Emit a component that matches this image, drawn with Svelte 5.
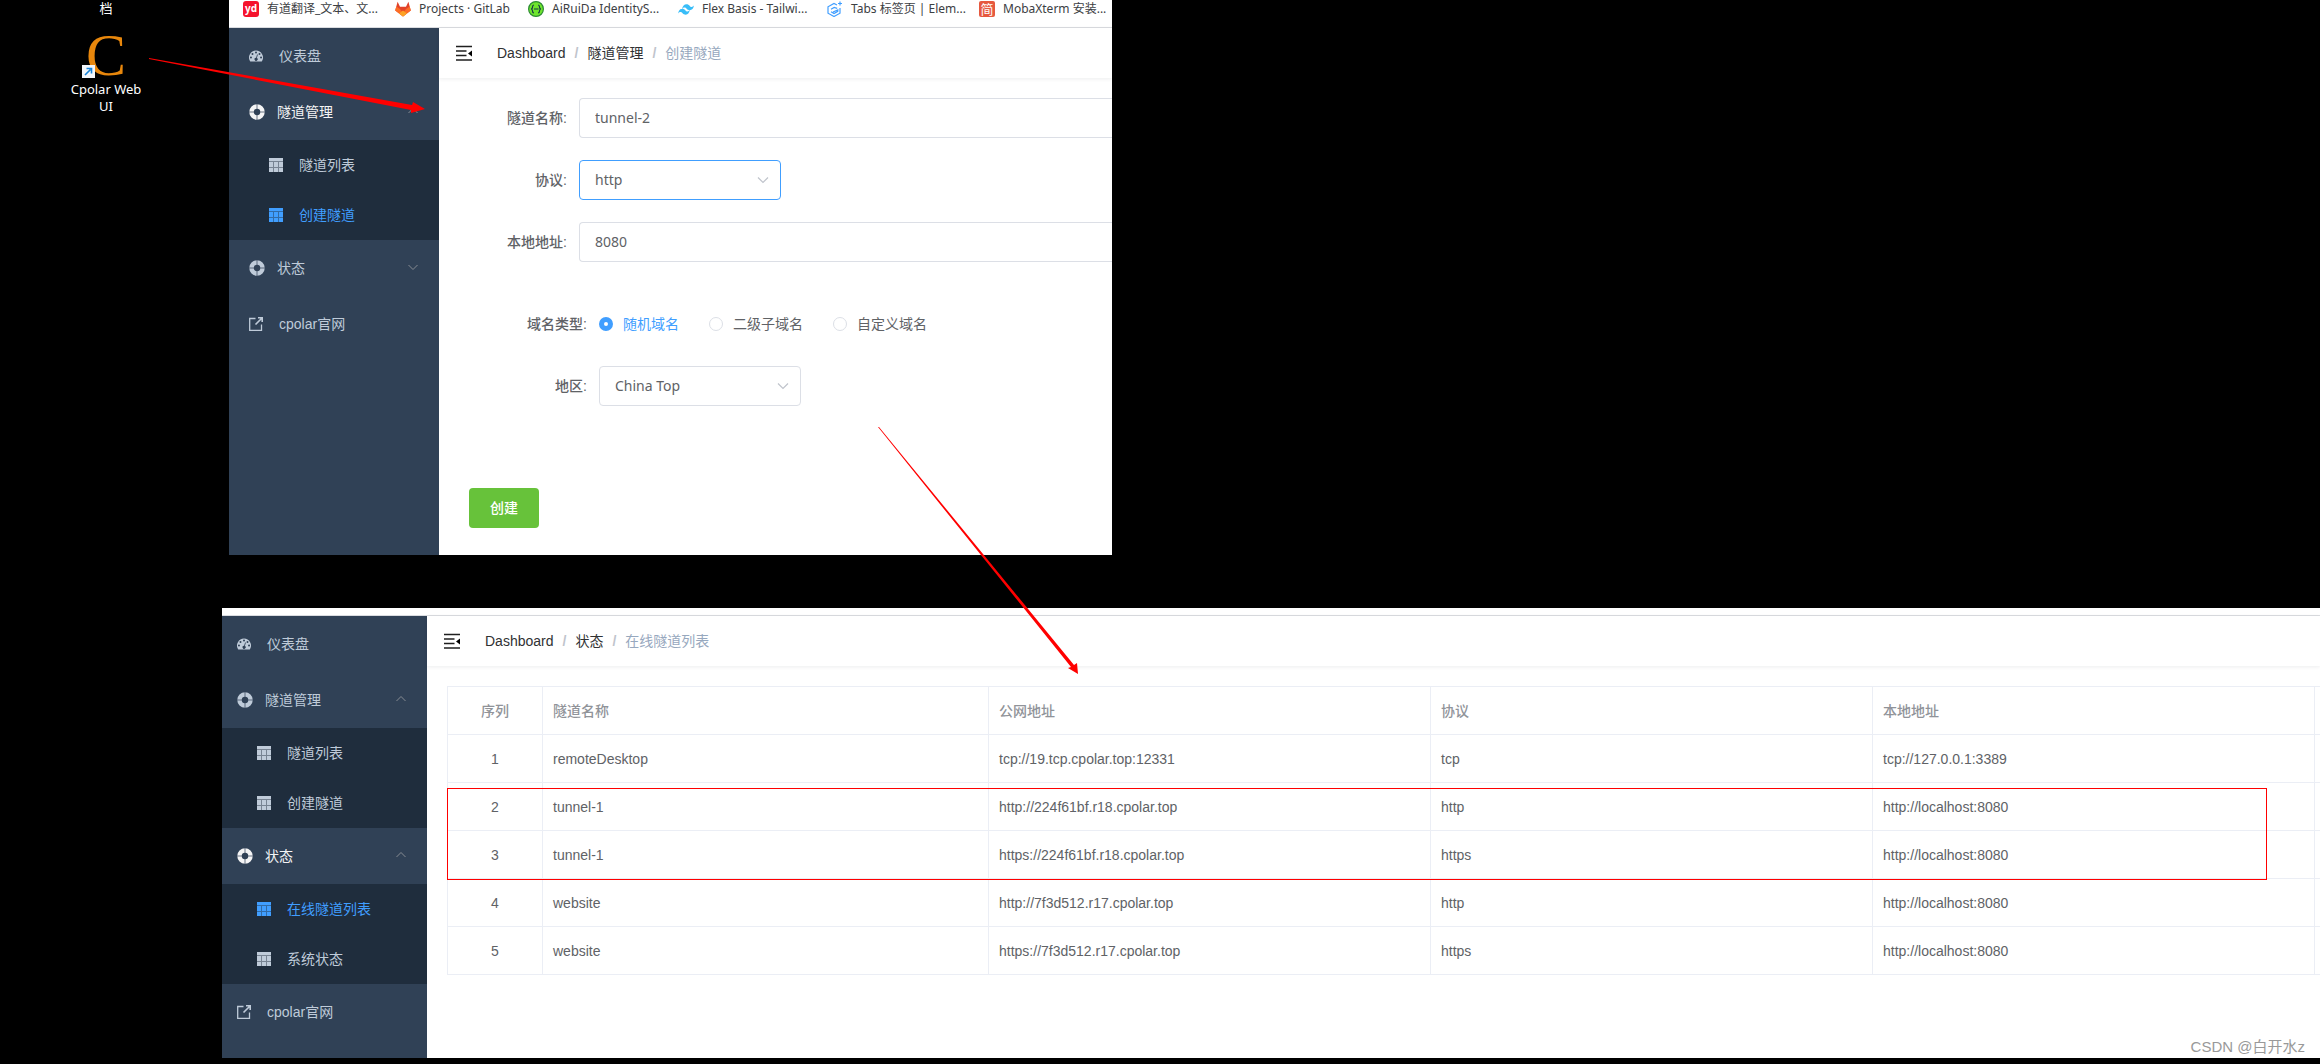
<script lang="ts">
    interface MenuItem {
        label: string;
        icon: string;
        state?: string;
        arrow?: string;
        children?: MenuItem[];
    }

    const bookmarks = [
        { label: '有道翻译_文本、文...', icon: 'youdao' },
        { label: 'Projects · GitLab', icon: 'gitlab' },
        { label: 'AiRuiDa IdentityS...', icon: 'swagger' },
        { label: 'Flex Basis - Tailwi...', icon: 'tailwind' },
        { label: 'Tabs 标签页 | Elem...', icon: 'element' },
        { label: 'MobaXterm 安装...', icon: 'jian' },
    ];

    const createMenu: MenuItem[] = [
        { label: '仪表盘', icon: 'dashboard' },
        {
            label: '隧道管理', icon: 'help', state: 'open', arrow: 'up',
            children: [
                { label: '隧道列表', icon: 'table' },
                { label: '创建隧道', icon: 'table', state: 'active' },
            ],
        },
        { label: '状态', icon: 'help', arrow: 'down' },
        { label: 'cpolar官网', icon: 'link' },
    ];

    const statusMenu: MenuItem[] = [
        { label: '仪表盘', icon: 'dashboard' },
        {
            label: '隧道管理', icon: 'help', arrow: 'up',
            children: [
                { label: '隧道列表', icon: 'table' },
                { label: '创建隧道', icon: 'table' },
            ],
        },
        {
            label: '状态', icon: 'help', state: 'open', arrow: 'up',
            children: [
                { label: '在线隧道列表', icon: 'table', state: 'active' },
                { label: '系统状态', icon: 'table' },
            ],
        },
        { label: 'cpolar官网', icon: 'link' },
    ];

    const tunnels = [
        { name: 'remoteDesktop', url: 'tcp://19.tcp.cpolar.top:12331', protocol: 'tcp', local: 'tcp://127.0.0.1:3389' },
        { name: 'tunnel-1', url: 'http://224f61bf.r18.cpolar.top', protocol: 'http', local: 'http://localhost:8080' },
        { name: 'tunnel-1', url: 'https://224f61bf.r18.cpolar.top', protocol: 'https', local: 'http://localhost:8080' },
        { name: 'website', url: 'http://7f3d512.r17.cpolar.top', protocol: 'http', local: 'http://localhost:8080' },
        { name: 'website', url: 'https://7f3d512.r17.cpolar.top', protocol: 'https', local: 'http://localhost:8080' },
    ];

    const domainTypes = ['随机域名', '二级子域名', '自定义域名'];

    let tunnelName = $state('tunnel-2');
    let protocol = $state('http');
    let localAddress = $state('8080');
    let domainType = $state('随机域名');
    let region = $state('China Top');
</script>

{#snippet menuIcon(name: string)}
    {#if name === 'dashboard'}
        <svg class="icon" viewBox="0 0 128 100" aria-hidden="true">
            <path fill="currentColor" fill-rule="evenodd" d="M64 0a64 64 0 0 1 54 98q-1 2-4 2H14q-3 0-4-2A64 64 0 0 1 64 0zM18 55a9 9 0 1 0 0 18 9 9 0 0 0 0-18zm14-32a9 9 0 1 0 0 18 9 9 0 0 0 0-18zM64 9a9 9 0 1 0 0 18 9 9 0 0 0 0-18zm46 46a9 9 0 1 0 0 18 9 9 0 0 0 0-18zM96 23a9 9 0 1 0 0 18 9 9 0 0 0 0-18zM73 38l-8 28a14 14 0 1 0 7 2l8-28q0-4-3-5-3 0-4 3z" />
        </svg>
    {:else if name === 'help'}
        <svg class="icon big" viewBox="0 0 16 16" aria-hidden="true">
            <circle cx="8" cy="8" r="5.500" fill="none" stroke="currentColor" stroke-width="4.500" />
            <path class="gap" d="M8 0v5M8 11v5M0 8h5M11 8h5" stroke-width=".7" />
        </svg>
    {:else if name === 'table'}
        <svg class="icon" viewBox="0 0 14 14" aria-hidden="true">
            <path fill="currentColor" d="M0 0h14v3H0zM0 4h4v5H0zM5 4h4v5H5zM10 4h4v5h-4zM0 10h4v4H0zM5 10h4v4H5zM10 10h4v4h-4z" />
            <path fill="currentColor" opacity=".55" d="M0 3h14v1H0zM4 4h1v10H4zM9 4h1v10H9zM0 9h14v1H0z" />
        </svg>
    {:else}
        <svg class="icon" viewBox="0 0 14 14" fill="none" stroke="currentColor" aria-hidden="true">
            <path d="M6.500 1.500H.7v11.800h11.800V7.500" stroke-width="1.300" />
            <path d="M6.500 7.500L12.500 1.500M9 .8h4.200V5" stroke-width="1.600" />
        </svg>
    {/if}
{/snippet}

{#snippet sidebar(items: MenuItem[])}
    <nav class="sidebar">
        {#each items as item}
            <a href="#menu" class="menu-item {item.state ?? ''}" class:wide-icon={item.icon === 'help'}>
                {@render menuIcon(item.icon)}
                <span>{item.label}</span>
                {#if item.arrow}
                    <svg class="arrow {item.arrow}" viewBox="0 0 12 12" aria-hidden="true">
                        <path d="M1.500 8L6 3.500 10.500 8" fill="none" stroke="#909399" stroke-width=".9" />
                    </svg>
                {/if}
            </a>
            {#if item.children}
                <div class="submenu">
                    {#each item.children as child}
                        <a href="#menu" class="menu-item {child.state ?? ''}">
                            {@render menuIcon(child.icon)}
                            <span>{child.label}</span>
                        </a>
                    {/each}
                </div>
            {/if}
        {/each}
    </nav>
{/snippet}

{#snippet navbar(parent: string, current: string)}
    <header class="navbar">
        <button class="hamburger" aria-label="Toggle sidebar">
            <svg viewBox="0 0 20 20" aria-hidden="true">
                <path d="M2 3.500h16M2 8h10.500M2 12.500h10.500M2 17h16" fill="none" stroke="#1f1f1f" stroke-width="1.400" />
                <path d="M18 7.500v6l-4-3z" fill="#000" />
            </svg>
        </button>
        <div class="breadcrumb">
            <a href="#dashboard">Dashboard</a>
            <b>/</b>
            <a href="#parent">{parent}</a>
            <b>/</b>
            <span>{current}</span>
        </div>
    </header>
{/snippet}

{#snippet bookmarkIcon(name: string)}
    <svg viewBox="0 0 16 16" aria-hidden="true">
        {#if name === 'youdao'}
            <rect width="16" height="16" rx="3" fill="#f5132d" />
            <text x="8" y="11" text-anchor="middle" font-size="10" font-weight="700" fill="#fff">yd</text>
        {:else if name === 'gitlab'}
            <path fill="#e24329" d="M8 15.500L.2 9.500 2.600.8l2.400 5h6l2.400-5 2.400 8.700z" />
            <path fill="#fc6d26" d="M8 15.500L.2 9.500 1.300 5.500 5 8l3 4 3-4 3.700-2.500 1.100 4z" />
            <path fill="#fca326" d="M8 15.500l-4-3 4-3 4 3z" />
        {:else if name === 'swagger'}
            <circle cx="8" cy="8" r="7.400" fill="#6ee52d" stroke="#2c8b33" stroke-width="1.200" />
            <path d="M6 4Q4.500 4 4.500 6T3 8q1.500 0 1.500 2T6 12M10 4q1.500 0 1.500 2T13 8q-1.500 0-1.500 2T10 12M6 8h4.500" fill="none" stroke="#173647" stroke-width="1.200" />
        {:else if name === 'tailwind'}
            <path fill="#38bdf8" d="M4 8q1-4.800 4.500-4.800c3 0 3.200 2.400 4.500 2.800q1.600.4 3-1.400-1 4.600-4.200 4.600c-3 0-3.300-2.200-4.700-2.600Q5.400 6.200 4 8zM0 12.500q1-4.800 4.200-4.800c3 0 3.200 2.400 4.700 2.800q1.500.4 2.900-1.400-1 4.600-4 4.600c-3 0-3.300-2.200-4.900-2.600Q1.400 10.700 0 12.500z" />
        {:else if name === 'element'}
            <path d="M10 4L7 2.500 1 5.800v6.400l6 3.300 6-3.300V7M4 8.300l3.200-1.800 3 .8M4 10.800L7 12.500l3.800-2.100V9L6 11M13 .5v4M11 2.500h4" fill="none" stroke="#409eff" stroke-width="1.200" />
        {:else}
            <rect width="16" height="16" rx="2" fill="#e6593f" />
            <text x="8" y="13" text-anchor="middle" font-size="13" fill="#fff">简</text>
        {/if}
    </svg>
{/snippet}

<div class="desktop">
    <div class="top">
        <div class="shortcuts">
            <span class="shortcut-name">档</span>
            <a href="#cpolar" class="shortcut">
                <span class="shortcut-icon">
                    C
                    <svg viewBox="0 0 13 13" aria-hidden="true">
                        <path d="M0 0h13v13H0z" fill="#f3f6fa" />
                        <path d="M3 10L8.500 4.500M4.500 3.500h5v5" fill="none" stroke="#1683d8" stroke-width="1.600" />
                    </svg>
                </span>
                <span class="shortcut-name">Cpolar Web<br />UI</span>
            </a>
        </div>

        <section class="window">
            <div class="bookmarks">
                {#each bookmarks as bookmark}
                    <a href="#bookmark">
                        {@render bookmarkIcon(bookmark.icon)}
                        {bookmark.label}
                    </a>
                {/each}
            </div>
            <div class="app">
                {@render sidebar(createMenu)}
                <main>
                    {@render navbar('隧道管理', '创建隧道')}
                    <form class="tunnel-form">
                        <div class="row">
                            <label for="name">隧道名称:</label>
                            <input id="name" type="text" bind:value={tunnelName} />
                        </div>
                        <div class="row">
                            <label for="protocol">协议:</label>
                            <select id="protocol" class="focused" bind:value={protocol}>
                                <option>http</option>
                                <option>https</option>
                                <option>tcp</option>
                            </select>
                        </div>
                        <div class="row">
                            <label for="local">本地地址:</label>
                            <input id="local" type="text" bind:value={localAddress} />
                        </div>
                        <div class="nested">
                            <div class="row">
                                <span class="label" id="domain-label">域名类型:</span>
                                <div class="radios" role="radiogroup" aria-labelledby="domain-label">
                                    {#each domainTypes as type}
                                        <label class="radio" class:checked={domainType === type}>
                                            <input type="radio" name="domain" value={type} bind:group={domainType} />
                                            {type}
                                        </label>
                                    {/each}
                                </div>
                            </div>
                            <div class="row">
                                <label for="region">地区:</label>
                                <select id="region" bind:value={region}>
                                    <option>China Top</option>
                                    <option>China VIP</option>
                                </select>
                            </div>
                        </div>
                        <button type="button" class="submit">创建</button>
                    </form>
                </main>
            </div>
        </section>
    </div>

    <section class="window status">
        <div class="toolbar-edge"></div>
        <div class="app">
            {@render sidebar(statusMenu)}
            <main>
                {@render navbar('状态', '在线隧道列表')}
                <div class="table-wrap">
                    <table>
                        <colgroup>
                            <col class="col-index" />
                            <col class="col-name" />
                            <col />
                            <col />
                            <col />
                            <col class="col-rest" />
                        </colgroup>
                        <thead>
                            <tr>
                                <th>序列</th>
                                <th>隧道名称</th>
                                <th>公网地址</th>
                                <th>协议</th>
                                <th>本地地址</th>
                                <th></th>
                            </tr>
                        </thead>
                        <tbody>
                            {#each tunnels as tunnel, i}
                                <tr>
                                    <td>{i + 1}</td>
                                    <td>{tunnel.name}</td>
                                    <td>{tunnel.url}</td>
                                    <td>{tunnel.protocol}</td>
                                    <td>{tunnel.local}</td>
                                    <td></td>
                                </tr>
                            {/each}
                        </tbody>
                    </table>
                    <div class="highlight"></div>
                </div>
            </main>
        </div>
        <span class="watermark">CSDN @白开水z</span>
    </section>

    <svg class="annotations" aria-hidden="true">
        <path d="M149 58L412 105 413 102 425 109 411 113 411 110 149 59z" />
        <path d="M879 427L1074 665 1077 663 1078 674 1068 668 1071 667 878 427z" />
    </svg>
</div>

<style>
    :global(body) {
        background: #000;
    }

    * {
        box-sizing: border-box;
    }

    a {
        color: inherit;
        text-decoration: none;
    }

    .desktop {
        position: relative;
        overflow: hidden;
        padding-bottom: 6px;
        background: #000;
        font: 14px/20px "Liberation Sans", "Noto Sans CJK SC", sans-serif;
    }

    .top {
        display: grid;
        grid-template-columns: 229px 883fr 1208fr;
        margin-bottom: 53px;
    }

    .shortcuts {
        display: flex;
        flex-direction: column;
        align-items: center;
        width: 212px;
    }

    .shortcut {
        display: flex;
        flex-direction: column;
        align-items: center;
        margin-top: 12px;
    }

    .shortcut-name {
        color: #fff;
        font: 13px/17px "Noto Sans", "Noto Sans CJK SC", sans-serif;
        text-align: center;
    }

    .shortcut-icon {
        position: relative;
        width: 48px;
        height: 52px;
        color: #e8870c;
        font: 60px/52px "Liberation Serif", serif;
        text-align: center;
    }

    .shortcut-icon svg {
        position: absolute;
        left: 0;
        bottom: 3px;
        width: 13px;
        height: 13px;
    }

    .window {
        background: #fff;
        overflow: hidden;
    }

    .bookmarks {
        display: grid;
        grid-template-columns: 152px 133px 150px 149px 152px auto;
        height: 28px;
        padding-left: 14px;
        border-bottom: 1px solid #dadce0;
        color: #3c4043;
        font: 12px/18px "Noto Sans", "Noto Sans CJK SC", sans-serif;
        white-space: nowrap;
    }

    .bookmarks a {
        display: flex;
        align-items: center;
        gap: 8px;
        height: 18px;
    }

    .bookmarks svg {
        flex: none;
        width: 16px;
        height: 16px;
    }

    .app {
        display: flex;
    }

    .sidebar {
        --inset: 20px;
        flex: none;
        width: 210px;
        background: #304156;
        color: #bfcbd9;
    }

    .menu-item {
        display: flex;
        align-items: center;
        gap: 16px;
        height: 56px;
        padding: 0 20px 0 var(--inset);
    }

    .menu-item.wide-icon {
        gap: 12px;
    }

    .menu-item.open {
        color: #f4f4f5;
    }

    .submenu {
        background: #1f2d3d;
    }

    .submenu .menu-item {
        height: 50px;
        padding-left: calc(var(--inset) + 20px);
    }

    .submenu .menu-item.active {
        color: #409eff;
    }

    .icon {
        flex: none;
        width: 14px;
        height: 14px;
    }

    .icon.big {
        width: 16px;
        height: 16px;
    }

    .gap {
        stroke: #304156;
    }

    .arrow {
        width: 12px;
        height: 12px;
        margin-bottom: 2px;
        margin-left: auto;
    }

    .arrow.down {
        transform: rotate(180deg);
    }

    main {
        flex: 1;
        min-width: 0;
    }

    .navbar {
        display: flex;
        align-items: center;
        height: 50px;
        padding: 0 15px;
        box-shadow: 0 1px 4px rgba(0, 21, 41, 0.08);
    }

    .hamburger {
        width: 20px;
        height: 20px;
        margin-right: 23px;
        padding: 0;
        border: 0;
        background: none;
    }

    .hamburger svg {
        display: block;
    }

    .breadcrumb {
        display: flex;
        gap: 9px;
        color: #303133;
    }

    .breadcrumb b {
        color: #c0c4cc;
    }

    .breadcrumb span {
        color: #97a8be;
    }

    .tunnel-form {
        padding: 20px 0 27px 30px;
        color: #606266;
    }

    .row {
        display: flex;
        align-items: center;
        height: 40px;
        margin-bottom: 22px;
    }

    .row > label,
    .label {
        flex: none;
        width: 110px;
        padding-right: 12px;
        font-weight: 500;
        text-align: right;
    }

    .nested {
        padding-top: 20px;
        padding-bottom: 60px;
    }

    .nested .row > label,
    .nested .label {
        width: 130px;
    }

    input[type="text"],
    select {
        height: 40px;
        padding: 0 15px 2px;
        border: 1px solid #dcdfe6;
        border-radius: 4px;
        background-color: #fff;
        color: #606266;
        font: 14px "Noto Sans", "Noto Sans CJK SC", sans-serif;
    }

    input[type="text"] {
        flex: 1;
        border-right: 0;
        border-radius: 4px 0 0 4px;
    }

    select {
        appearance: none;
        width: 202px;
        background-image: url("data:image/svg+xml,%3Csvg xmlns='http://www.w3.org/2000/svg' viewBox='0 0 12 8'%3E%3Cpath d='M1 1.500l5 5 5-5' fill='none' stroke='%23c0c4cc' stroke-width='1.200'/%3E%3C/svg%3E");
        background-repeat: no-repeat;
        background-position: right 11px center;
        background-size: 12px 8px;
    }

    select.focused {
        border-color: #409eff;
    }

    .radios {
        display: flex;
        gap: 30px;
    }

    .radio {
        display: flex;
        align-items: center;
        gap: 10px;
    }

    .radio.checked {
        color: #409eff;
    }

    .radio input {
        appearance: none;
        width: 14px;
        height: 14px;
        margin: 0;
        border: 1px solid #dcdfe6;
        border-radius: 50%;
        background: #fff;
    }

    .radio input:checked {
        border: 5px solid #409eff;
    }

    .submit {
        display: block;
        height: 40px;
        padding: 0 21px;
        border: 0;
        border-radius: 4px;
        background: #67c23a;
        color: #fff;
        font: inherit;
        font-weight: 500;
    }

    .status {
        position: relative;
        margin-left: 222px;
    }

    /* the left edge of this window is cut off a little */
    .status .sidebar {
        --inset: 15px;
        width: 205px;
        padding-bottom: 18px;
    }

    .toolbar-edge {
        height: 8px;
        border-bottom: 1px solid #dadce0;
    }

    .table-wrap {
        position: relative;
        padding: 20px 0 0 20px;
    }

    table {
        width: 100%;
        table-layout: fixed;
        border-spacing: 0;
        border-top: 1px solid #ebeef5;
        border-left: 1px solid #ebeef5;
        color: #606266;
    }

    .col-index {
        width: 95px;
    }

    .col-name {
        width: 446px;
    }

    .col-rest {
        width: 5px;
    }

    th,
    td {
        height: 48px;
        padding: 0 10px;
        border-right: 1px solid #ebeef5;
        border-bottom: 1px solid #ebeef5;
        text-align: left;
    }

    th {
        color: #909399;
        font-weight: 500;
    }

    th:first-child,
    td:first-child {
        text-align: center;
    }

    th:last-child,
    td:last-child {
        padding: 0;
        border-right: 0;
    }

    .highlight {
        position: absolute;
        top: 122px;
        left: 20px;
        right: 53px;
        height: 92px;
        border: 1px solid #f00;
    }

    .watermark {
        position: absolute;
        right: 15px;
        bottom: 1px;
        color: #999;
        font-size: 15px;
    }

    .annotations {
        position: absolute;
        top: 0;
        left: 0;
        width: 100%;
        height: 100%;
        fill: #f00;
        pointer-events: none;
    }
</style>
